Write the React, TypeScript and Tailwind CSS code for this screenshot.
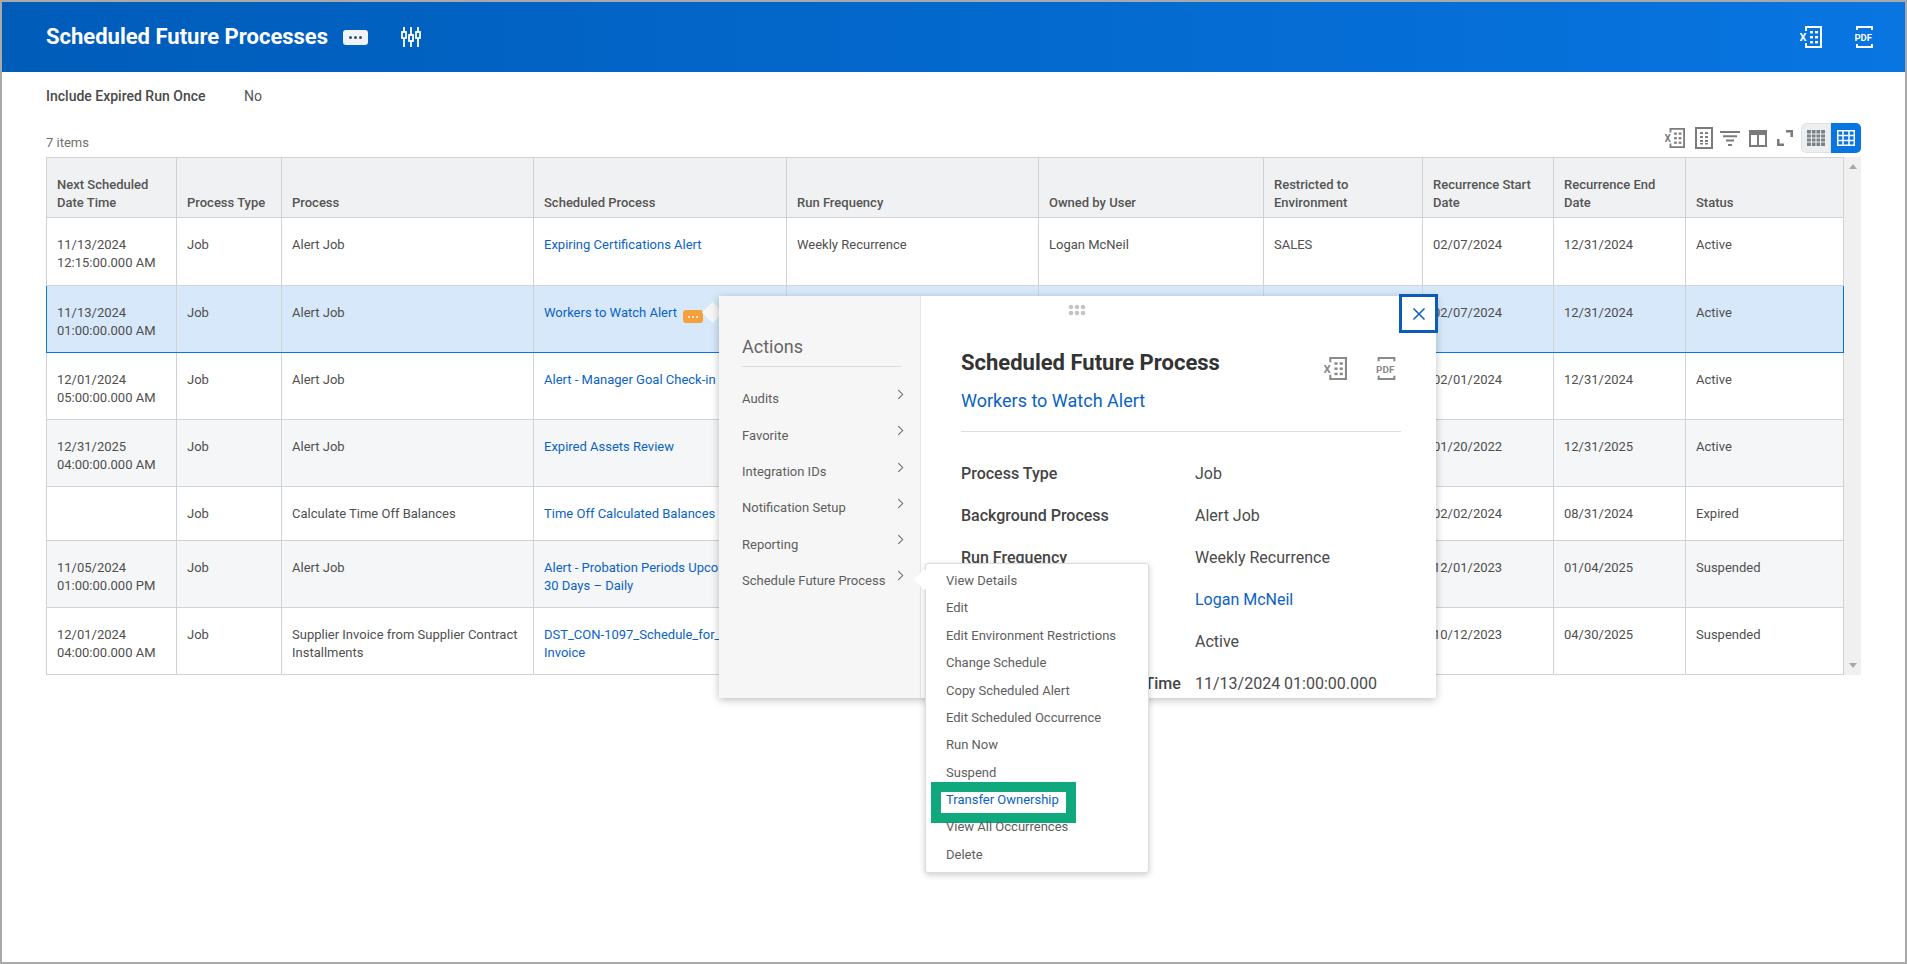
import { ReactNode } from 'react'

const colWidths = [130, 105, 252, 253, 252, 225, 159, 131, 132, 158]

const headers = [
  'Next Scheduled Date Time',
  'Process Type',
  'Process',
  'Scheduled Process',
  'Run Frequency',
  'Owned by User',
  'Restricted to Environment',
  'Recurrence Start Date',
  'Recurrence End Date',
  'Status',
]

const rows = [
  { h: 'h-[68px]', bg: 'bg-white', cells: ['11/13/2024\n12:15:00.000 AM', 'Job', 'Alert Job', 'Expiring Certifications Alert', 'Weekly Recurrence', 'Logan McNeil', 'SALES', '02/07/2024', '12/31/2024', 'Active'] },
  { h: 'h-[67px]', bg: 'bg-[#d6e8fa]', selected: true, cells: ['11/13/2024\n01:00:00.000 AM', 'Job', 'Alert Job', 'Workers to Watch Alert', 'Weekly Recurrence', 'Logan McNeil', '', '02/07/2024', '12/31/2024', 'Active'] },
  { h: 'h-[67px]', bg: 'bg-white', cells: ['12/01/2024\n05:00:00.000 AM', 'Job', 'Alert Job', 'Alert - Manager Goal Check-in', 'Weekly Recurrence', 'Logan McNeil', '', '02/01/2024', '12/31/2024', 'Active'] },
  { h: 'h-[67px]', bg: 'bg-[#f5f6f8]', cells: ['12/31/2025\n04:00:00.000 AM', 'Job', 'Alert Job', 'Expired Assets Review', 'Weekly Recurrence', 'Logan McNeil', '', '01/20/2022', '12/31/2025', 'Active'] },
  { h: 'h-[54px]', bg: 'bg-white', cells: ['', 'Job', 'Calculate Time Off Balances', 'Time Off Calculated Balances', 'Weekly Recurrence', 'Logan McNeil', '', '02/02/2024', '08/31/2024', 'Expired'] },
  { h: 'h-[67px]', bg: 'bg-[#f5f6f8]', cells: ['11/05/2024\n01:00:00.000 PM', 'Job', 'Alert Job', 'Alert - Probation Periods Upcoming in 30 Days – Daily', 'Daily Recurrence', 'Logan McNeil', '', '12/01/2023', '01/04/2025', 'Suspended'] },
  { h: 'h-[67px]', bg: 'bg-white', cells: ['12/01/2024\n04:00:00.000 AM', 'Job', 'Supplier Invoice from Supplier Contract Installments', 'DST_CON-1097_Schedule_for_Supplier Invoice', 'Weekly Recurrence', 'Logan McNeil', '', '10/12/2023', '04/30/2025', 'Suspended'] },
]

const actions = ['Audits', 'Favorite', 'Integration IDs', 'Notification Setup', 'Reporting', 'Schedule Future Process']

const subActions = [
  'View Details',
  'Edit',
  'Edit Environment Restrictions',
  'Change Schedule',
  'Copy Scheduled Alert',
  'Edit Scheduled Occurrence',
  'Run Now',
  'Suspend',
  'Transfer Ownership',
  'View All Occurrences',
  'Delete',
]

const details: { label: string; value: string; link?: boolean }[] = [
  { label: 'Process Type', value: 'Job' },
  { label: 'Background Process', value: 'Alert Job' },
  { label: 'Run Frequency', value: 'Weekly Recurrence' },
  { label: 'Owned by User', value: 'Logan McNeil', link: true },
  { label: 'Status', value: 'Active' },
  { label: 'Next Scheduled Date and Time', value: '11/13/2024 01:00:00.000 AM' },
]

function ExcelIcon({ className }: { className: string }) {
  return (
    <svg viewBox="0 0 22 22" className={className} fill="currentColor">
      <path d="M5 0h17v22H5v-5h2v3h13V2H7v3H5z" />
      <rect x="10" y="5" width="3" height="2.4" />
      <rect x="15" y="5" width="3" height="2.4" />
      <rect x="10" y="10" width="3" height="2.4" />
      <rect x="15" y="10" width="3" height="2.4" />
      <rect x="10" y="15" width="3" height="2.4" />
      <rect x="15" y="15" width="3" height="2.4" />
      <text x="-0.5" y="15" fontSize="11" fontWeight="700" fontFamily="Roboto, sans-serif">X</text>
    </svg>
  )
}

function PdfIcon({ className }: { className: string }) {
  return (
    <svg viewBox="0 0 19 22" className={className} fill="currentColor">
      <path d="M1 0h17v4h-2V2H3v2H1zM1 18h2v2h13v-2h2v4H1z" />
      <text x="-0.5" y="15" fontSize="9.5" fontWeight="700" fontFamily="Roboto, sans-serif">PDF</text>
    </svg>
  )
}

function ToolbarIcons() {
  return (
    <div className="flex items-center text-[#7b7b7b]">
      <ExcelIcon className="w-[20px] h-[20px] mr-[10px]" />
      <svg viewBox="0 0 18 22" className="w-[18px] h-[22px] mr-[7px]" fill="currentColor">
        <path d="M0 0h18v22H0zm2 2v18h14V2z" />
        <path d="M5 5h3v2H5zM10 5h3v2h-3zM5 9h3v2H5zM10 9h3v2h-3zM5 13h3v2H5zM10 13h3v2h-3zM5 16h3v1.500H5zM10 16h3v1.500h-3z" />
      </svg>
      <svg viewBox="0 0 20 15" className="w-[20px] h-[15px] mr-[9px]" fill="currentColor">
        <path d="M0 0h20v2H0zM3 4.300h14v2H3zM6 8.600h8v2H6zM8 13h4v2H8z" />
      </svg>
      <svg viewBox="0 0 18 17" className="w-[18px] h-[17px] mr-[10px]" fill="currentColor">
        <path d="M0 0h18v17H0zm2 5v10h6V5zm8 0v10h6V5z" />
      </svg>
      <svg viewBox="0 0 16 16" className="w-[16px] h-[16px] mr-[8px]" fill="currentColor">
        <path d="M9 0h7v7h-2.500V2.500H9zM0 9h2.500v4.500H7V16H0z" />
      </svg>
      <div className="flex w-[60px] h-[30px] rounded-[5px] overflow-hidden">
        <div className="w-[30px] flex items-center justify-center bg-[#eceef0] border border-[#dfe1e3] rounded-l-[5px]">
          <svg viewBox="0 0 18 16" className="w-[18px] h-[16px]">
            <rect width="18" height="16" fill="#7b8188" />
            <path d="M4.400 0v16M9 0v16M13.600 0v16M0 4h18M0 8h18M0 12h18" stroke="#eceef0" strokeWidth="1" />
          </svg>
        </div>
        <div className="w-[30px] flex items-center justify-center bg-[#0875e1]">
          <svg viewBox="0 0 18 16" className="w-[18px] h-[16px]" fill="none" stroke="#fff" strokeWidth="1.500">
            <rect x="0.750" y="0.750" width="16.500" height="14.500" />
            <path d="M6 0v16M12 0v16M0 5.500h18M0 10.500h18" />
          </svg>
        </div>
      </div>
    </div>
  )
}

function Chevron() {
  return (
    <svg viewBox="0 0 8 12" className="w-[7px] h-[11px] text-[#666]" fill="none" stroke="currentColor" strokeWidth="1.200">
      <path d="M1.500 1l5 5-5 5" />
    </svg>
  )
}

function Cell({ children, selected, last, first }: { children: ReactNode; selected?: boolean; last?: boolean; first?: boolean }) {
  return (
    <td
      className={`align-top pt-[18px] px-[10px] text-[13px] leading-[18px] border-y border-x whitespace-pre-line ${
        selected ? 'border-y-[#0875e1]' : 'border-y-[#d0d2d5]'
      } ${selected && (first || last) ? (first ? 'border-l-[#0875e1] border-r-[#d0d2d5]' : 'border-r-[#0875e1] border-l-[#d0d2d5]') : 'border-x-[#d0d2d5]'}`}
    >
      {children}
    </td>
  )
}

function DataTable() {
  return (
    <div className="flex w-[1815px]">
      <table className="table-fixed border-collapse w-[1797px] h-fit text-[#4f4f4f]">
        <colgroup>
          {colWidths.map((w) => (
            <col key={w + Math.random()} style={{ width: w }} />
          ))}
        </colgroup>
        <thead>
          <tr className="h-[60px] bg-[#f0f1f2]">
            {headers.map((h) => (
              <th key={h} className="align-bottom pb-[5px] px-[10px] text-left text-[13px] leading-[18px] font-medium border border-[#d0d2d5] text-[#555]">
                {h === headers[0] ? 'Next Scheduled\nDate Time'.split('\n').map((l) => <div key={l}>{l}</div>) : h}
              </th>
            ))}
          </tr>
        </thead>
        <tbody>
          {rows.map((row, i) => (
            <tr key={i} className={`${row.h} ${row.bg}`}>
              {row.cells.map((c, j) => (
                <Cell key={j} selected={row.selected} first={j === 0} last={j === 9}>
                  {j === 3 ? (
                    <>
                      <a className="text-[#0b63c5]">{c}</a>
                      {row.selected && (
                        <span className="inline-flex items-center justify-center gap-[1.500px] ml-[6px] w-[20px] h-[13px] rounded-[3px] bg-[#f5a03a] align-[-1px]">
                          <i className="w-[2.500px] h-[2.500px] rounded-full bg-white" />
                          <i className="w-[2.500px] h-[2.500px] rounded-full bg-white" />
                          <i className="w-[2.500px] h-[2.500px] rounded-full bg-white" />
                        </span>
                      )}
                    </>
                  ) : (
                    c
                  )}
                </Cell>
              ))}
            </tr>
          ))}
        </tbody>
      </table>
      <div className="w-[18px] h-[518px] bg-[#f0f0f0] flex flex-col items-center justify-between py-[7px] text-[#a8a8a8]">
        <svg viewBox="0 0 10 6" className="w-[8px] h-[5px]" fill="currentColor"><path d="M5 0l5 6H0z" /></svg>
        <svg viewBox="0 0 10 6" className="w-[8px] h-[5px]" fill="currentColor"><path d="M0 0h10L5 6z" /></svg>
      </div>
    </div>
  )
}

function RelatedPopup() {
  return (
    <>
      <div className="absolute left-[703px] top-[303px] w-[15px] h-[15px] rotate-45 bg-[#f6f6f6]" />
      <div className="absolute left-[717px] top-[294px] w-[717px] h-[402px] flex bg-white shadow-[0_2px_8px_rgba(0,0,0,0.25)] overflow-hidden">
        <div className="w-[202px] shrink-0 bg-[#f6f6f6] border-r border-[#e6e6e6] pl-[23px] pr-[19px] pt-[40px]">
          <div className="text-[18px] leading-[22px] text-[#666] pb-[8px] border-b border-[#dedede]">Actions</div>
          <ul className="mt-[14px]">
            {actions.map((a) => (
              <li key={a} className="h-[36.300px] flex items-center justify-between text-[13px] text-[#5e5e5e] relative">
                {a}
                <span className="absolute right-[-3px] top-[8px]">
                  <Chevron />
                </span>
              </li>
            ))}
          </ul>
        </div>
        <div className="relative flex-1 pl-[40px] pr-[35px] pt-[54px] text-[#4a4a4a]">
          <svg viewBox="0 0 18 12" className="absolute left-[147px] top-[8px] w-[18px] h-[12px]" fill="#c4c4c4">
            <circle cx="3" cy="3" r="2.300" /><circle cx="9" cy="3" r="2.300" /><circle cx="15" cy="3" r="2.300" />
            <circle cx="3" cy="9" r="2.300" /><circle cx="9" cy="9" r="2.300" /><circle cx="15" cy="9" r="2.300" />
          </svg>
          <div className="flex justify-between items-start pr-[4px]">
            <h2 className="text-[22px] leading-[26px] font-bold text-[#333]">Scheduled Future Process</h2>
            <div className="flex gap-[29px] text-[#8a8a8a] mt-[7px]">
              <ExcelIcon className="w-[23px] h-[23px]" />
              <PdfIcon className="w-[21px] h-[23px]" />
            </div>
          </div>
          <a className="block mt-[9px] text-[18px] leading-[24px] text-[#0b63c5]">Workers to Watch Alert</a>
          <div className="mt-[18px] h-px bg-[#dedede]" />
          <dl className="mt-[31px]">
            {details.map((d) => (
              <div key={d.label} className="flex h-[42px] text-[16px] leading-[22px]">
                <dt className="w-[234px] shrink-0 font-medium whitespace-nowrap text-[#444]">{d.label}</dt>
                <dd className={d.link ? 'text-[#0b63c5]' : ''}>{d.value}</dd>
              </div>
            ))}
          </dl>
        </div>
      </div>
      <button className="absolute left-[1397px] top-[292px] w-[39px] h-[39px] flex items-center justify-center bg-white border-[3px] border-[#0b5cb5]">
        <svg viewBox="0 0 14 14" className="w-[14px] h-[14px]" fill="none" stroke="#0b5cb5" strokeWidth="1.500">
          <path d="M1.500 1.500l11 11M12.500 1.500l-11 11" />
        </svg>
      </button>
    </>
  )
}

function SubMenu() {
  return (
    <div className="absolute left-[923px] top-[561px] w-[224px] h-[310px] bg-white border border-[#dcdcdc] rounded-[3px] shadow-[0_2px_6px_rgba(0,0,0,0.2)]">
      <div className="absolute left-[-9px] top-[8px] w-[15px] h-[15px] rotate-45 bg-white" />
      <ul className="relative pl-[20px] pt-[3px]">
        {subActions.map((s) => {
          const marked = s === 'Transfer Ownership'
          return (
            <li key={s} className={`relative flex items-center h-[27.400px] text-[13px] whitespace-nowrap ${marked ? 'text-[#0b63c5]' : 'text-[#5e5e5e]'}`}>
              {marked && <span className="absolute left-[-15px] top-[-4px] w-[145px] h-[41px] bg-white border-[10px] border-[#0fa97d]" />}
              <span className="relative">{s}</span>
            </li>
          )
        })}
      </ul>
    </div>
  )
}

export default function App() {
  return (
    <div className="relative w-[1907px] h-[964px] overflow-hidden border-2 border-[#a9a9a9] bg-white font-['Roboto',sans-serif]">
      <header className="h-[70px] flex items-center justify-between pl-[44px] pr-[31px] bg-gradient-to-r from-[#005cb9] to-[#0875e1] text-white">
        <div className="flex items-center">
          <h1 className="text-[22px] leading-[28px] font-bold">Scheduled Future Processes</h1>
          <span className="ml-[15px] w-[25px] h-[15px] flex items-center justify-center gap-[2px] rounded-[3px] bg-[#f1f4f7]">
            <i className="w-[3px] h-[3px] rounded-full bg-[#33506e]" />
            <i className="w-[3px] h-[3px] rounded-full bg-[#33506e]" />
            <i className="w-[3px] h-[3px] rounded-full bg-[#33506e]" />
          </span>
          <svg viewBox="0 0 20 20" className="ml-[33px] w-[20px] h-[20px]" fill="none" stroke="currentColor" strokeWidth="1.800">
            <path d="M3 0v5M3 11v9M10 0v8M10 14v6M17 0v5M17 11v9" />
            <rect x="1" y="5" width="4" height="6" />
            <rect x="8" y="8" width="4" height="6" />
            <rect x="15" y="5" width="4" height="6" />
          </svg>
        </div>
        <div className="flex items-center gap-[33px]">
          <ExcelIcon className="w-[22px] h-[22px]" />
          <PdfIcon className="w-[19px] h-[22px]" />
        </div>
      </header>

      <main className="px-[44px]">
        <div className="mt-[14px] flex items-center h-[20px] text-[14px]">
          <span className="w-[198px] font-medium text-[#4a4a4a]">Include Expired Run Once</span>
          <span className="text-[#555]">No</span>
        </div>
        <div className="mt-[17px] h-[30px] flex items-end justify-between">
          <span className="text-[13px] leading-[20px] text-[#707070]">7 items</span>
          <ToolbarIcons />
        </div>
        <div className="mt-[4px]">
          <DataTable />
        </div>
      </main>

      <RelatedPopup />
      <SubMenu />
    </div>
  )
}
